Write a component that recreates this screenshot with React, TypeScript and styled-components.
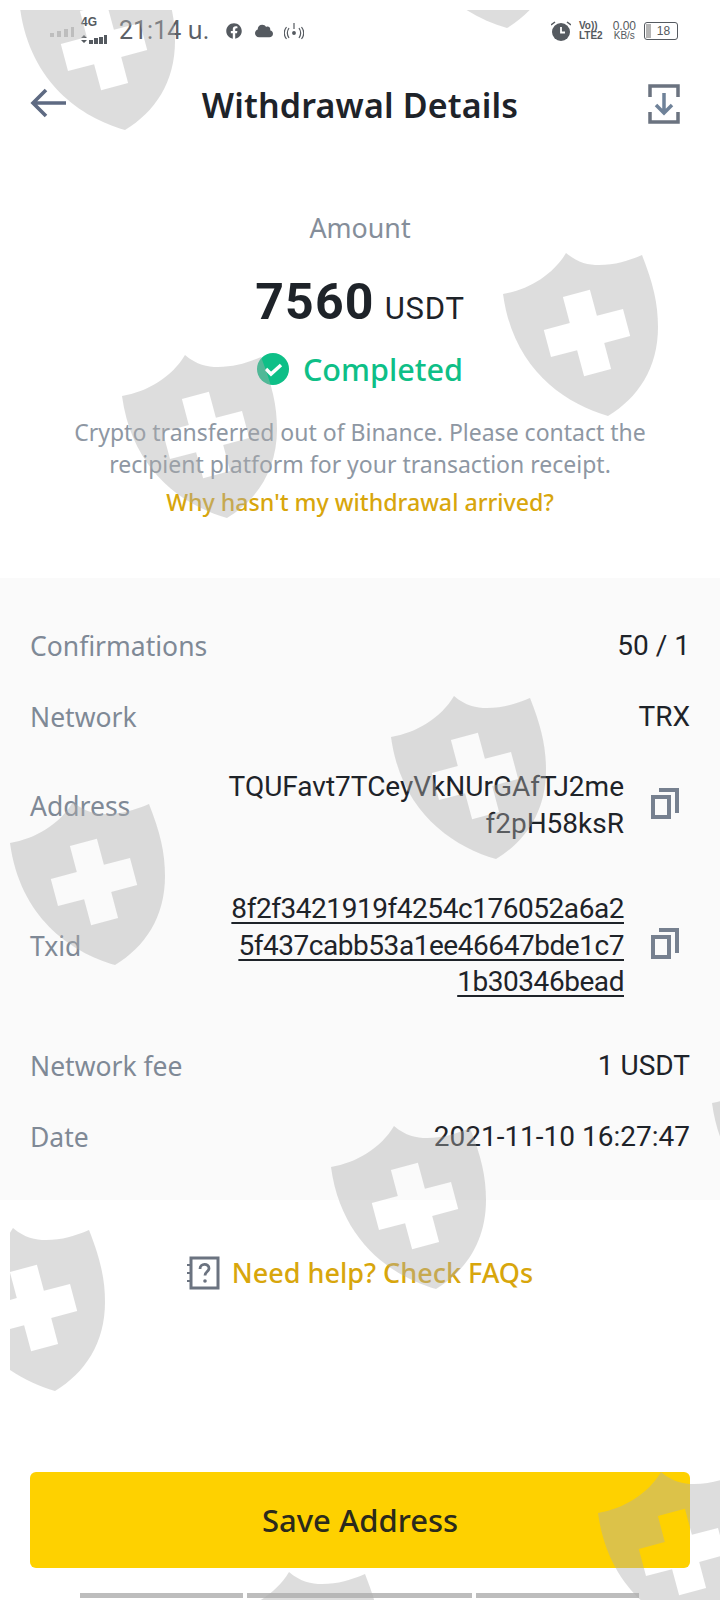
import React from "react";
import styled, { createGlobalStyle } from "styled-components";
import { FaFacebook, FaCloud } from "react-icons/fa";

const Global = createGlobalStyle`
  html, body { margin: 0; padding: 0; background: #fff; }
  * { box-sizing: border-box; }
`;

const plex = `"Noto Sans", "Liberation Sans", sans-serif`;
const din = `Roboto, "Liberation Sans", sans-serif`;

const Page = styled.div`
  position: relative;
  width: 720px;
  height: 1600px;
  overflow: hidden;
  display: flex;
  flex-direction: column;
  background: #fff;
  font-family: ${plex};
  color: #1e2329;
`;

const StatusBar = styled.div`
  height: 60px;
  display: flex;
  align-items: center;
  justify-content: space-between;
  padding: 1px 42px 0 50px;
  color: #555a60;
`;
const StatusGroup = styled.div`
  display: flex;
  align-items: center;
`;
const Signal = styled.svg`
  display: block;
`;
const Net = styled.div`
  position: relative;
  width: 28px;
  height: 28px;
  margin: 0 11px 0 5px;
`;
const NetLabel = styled.span`
  position: absolute;
  left: 1px;
  top: -2px;
  font: 700 12px "Liberation Sans", sans-serif;
  color: #555a60;
`;
const NetBars = styled.svg`
  position: absolute;
  left: 0;
  bottom: 0;
`;
const Clock = styled.span`
  font: 400 25px ${din}, "Noto Sans Thai";
  color: #5c6066;
  margin-right: 17px;
  white-space: nowrap;
`;
const StatusIcon = styled.span<{ $mr: number }>`
  display: flex;
  margin-right: ${(p) => p.$mr}px;
  color: #555a60;
`;
const Volte = styled.span`
  display: flex;
  flex-direction: column;
  font: 700 10px/10px "Liberation Sans", sans-serif;
  margin-right: 10px;
`;
const Speed = styled.span`
  display: flex;
  flex-direction: column;
  align-items: center;
  font: 400 10px/10px "Liberation Sans", sans-serif;
  margin-right: 8px;
`;
const SpeedNum = styled.span`
  font-size: 12px;
`;
const Battery = styled.span`
  position: relative;
  width: 34px;
  height: 18px;
  border: 1.5px solid #555a60;
  border-radius: 3px;
  display: flex;
  align-items: center;
  justify-content: center;
  padding-left: 5px;
  font: 400 12px "Liberation Sans", sans-serif;
`;
const BatteryFill = styled.span`
  position: absolute;
  left: 1px;
  top: 1px;
  bottom: 1px;
  width: 5px;
  background: #b5b5b5;
`;

const TopBar = styled.div`
  height: 88px;
  display: flex;
  align-items: center;
  justify-content: space-between;
  padding: 0 40px 0 30px;
`;
const BackIcon = styled.svg`
  margin-top: -2px;
`;
const Title = styled.h1`
  margin: 2px 0 0 4px;
  font-size: 34px;
  font-weight: 600;
  line-height: 44px;
  color: #1e2329;
  letter-spacing: 0.15px;
`;

const Summary = styled.div`
  height: 430px;
  display: flex;
  flex-direction: column;
  align-items: center;
  padding-top: 64px;
`;
const AmountLabel = styled.div`
  font-size: 26.8px;
  line-height: 32px;
  color: #858e9a;
`;
const AmountRow = styled.div`
  margin-top: 28px;
  height: 60px;
  display: flex;
  align-items: baseline;
  gap: 10px;
`;
const AmountValue = styled.span`
  font: 700 50px/60px ${din};
  letter-spacing: 1.2px;
`;
const AmountUnit = styled.span`
  font: 400 31px/60px ${din};
  letter-spacing: 0.8px;
`;
const StatusRow = styled.div`
  margin-top: 17px;
  height: 40px;
  display: flex;
  align-items: center;
  gap: 14px;
`;
const Completed = styled.span`
  font-size: 30.6px;
  font-weight: 500;
  line-height: 40px;
  color: #0ebf87;
`;
const Note = styled.p`
  margin: 28px 0 0;
  font-size: 23px;
  line-height: 31.5px;
  color: #8e97a3;
  text-align: center;
`;
const Link = styled.div`
  margin-top: 6px;
  font-size: 23.2px;
  font-weight: 500;
  line-height: 32px;
  color: #d8a60c;
`;

const Details = styled.section`
  height: 622px;
  background: #fafafa;
  padding: 50px 30px 0;
  display: flex;
  flex-direction: column;
`;
const Row = styled.div<{ $gap?: number }>`
  display: flex;
  align-items: center;
  justify-content: space-between;
  margin-top: ${(p) => p.$gap ?? 0}px;
`;
const Label = styled.span`
  font-size: 26.5px;
  line-height: 36px;
  color: #7f8996;
`;
const Value = styled.span`
  font: 400 28px/36px ${din};
  color: #1e2329;
`;
const ValueWrap = styled.div`
  display: flex;
  align-items: center;
  gap: 27px;
`;
const LongValue = styled.div<{ $underline?: boolean }>`
  width: 398px;
  font: 400 28px/36.5px ${din};
  letter-spacing: ${(p) => (p.$underline ? "-0.45px" : "0")};
  text-align: right;
  word-break: break-all;
  color: #1e2329;
  text-decoration: ${(p) => (p.$underline ? "underline" : "none")};
  text-underline-offset: 4px;
  text-decoration-thickness: 1.5px;
`;
const CopyIcon = styled.svg`
  flex: none;
  display: block;
  margin-right: 11px;
  margin-top: -6px;
`;

const Faq = styled.div`
  margin-top: 55px;
  height: 36px;
  display: flex;
  align-items: center;
  justify-content: center;
  gap: 12px;
`;
const FaqText = styled.span`
  font-size: 27px;
  font-weight: 500;
  line-height: 36px;
  color: #d8a60c;
`;

const SaveButton = styled.button`
  margin: auto 30px 0;
  height: 96px;
  flex: none;
  border: 0;
  border-radius: 6px;
  background: #fed100;
  font-family: ${plex};
  font-size: 31px;
  font-weight: 500;
  color: #2b2a1c;
`;
const NavBar = styled.div`
  margin: 25px 0 2px 80px;
  height: 5px;
  flex: none;
  display: flex;
  gap: 4px;
`;
const NavSeg = styled.span<{ $w: number }>`
  width: ${(p) => p.$w}px;
  background: #bdbdbd;
`;

const Watermarks = styled.div`
  position: absolute;
  inset: 10px 0 0 10px;
  overflow: hidden;
  pointer-events: none;
`;
const Shield = styled.svg<{ $x: number; $y: number }>`
  position: absolute;
  left: ${(p) => p.$x - 10}px;
  top: ${(p) => p.$y - 10}px;
`;

const cross = (() => {
  const c = [84, 80];
  const u = [0.966, -0.259];
  const v = [0.259, 0.966];
  const L = 41;
  const W = 14;
  const pts = [
    [-W, -L], [W, -L], [W, -W], [L, -W], [L, W], [W, W],
    [W, L], [-W, L], [-W, W], [-L, W], [-L, -W], [-W, -W],
  ].map(([a, b]) => `${(c[0] + a * u[0] + b * v[0]).toFixed(1)} ${(c[1] + a * u[1] + b * v[1]).toFixed(1)}`);
  return `M${pts.join("L")}Z`;
})();
const shieldPath = `M0 41C25 37 50 22 63 0C75 10 85 12 96 12C112 12 125 8 139 2C150 30 155 50 155 74C155 115 135 145 105 163C60 150 10 115 0 41Z${cross}`;

const shields = [
  [20, -33], [402, -135], [503, 253], [122, 355], [391, 696],
  [10, 802], [331, 1126], [-50, 1228], [598, 1472], [226, 1572], [712, 1062],
];

const Copy = () => (
  <CopyIcon width="28" height="32" viewBox="0 0 28 32" fill="none" stroke="#76808f" strokeWidth="4">
    <rect x="2" y="10" width="16" height="20" />
    <path d="M8 3h18v23" />
  </CopyIcon>
);

export default function App() {
  return (
    <Page>
      <Global />
      <StatusBar>
        <StatusGroup>
          <Signal width="25" height="12" viewBox="0 0 25 12" fill="#c9c9c9">
            <rect x="0" y="8" width="4" height="4" />
            <rect x="7" y="6" width="4" height="6" />
            <rect x="14" y="4" width="4" height="8" />
            <rect x="21" y="2" width="3" height="10" />
          </Signal>
          <Net>
            <NetLabel>4G</NetLabel>
            <NetBars width="28" height="12" viewBox="0 0 28 12" fill="#555a60">
              <path d="M1 5l3-3 3 3zM1 7h6l-3 3z" />
              <rect x="9" y="7" width="4" height="4" />
              <rect x="14" y="5" width="4" height="6" />
              <rect x="19" y="4" width="4" height="7" />
              <rect x="24" y="2" width="3" height="9" />
            </NetBars>
          </Net>
          <Clock>21:14 น.</Clock>
          <StatusIcon $mr={13}><FaFacebook size={16} /></StatusIcon>
          <StatusIcon $mr={11}><FaCloud size={18} /></StatusIcon>
          <StatusIcon $mr={0}>
            <svg width="20" height="20" viewBox="0 0 20 20" fill="none" stroke="#555a60" strokeWidth="1.2">
              <circle cx="10" cy="12" r="1.3" fill="#555a60" />
              <path d="M10 2v6M5 7c-2 3-2 7 0 10M15 7c2 3 2 7 0 10M2.500 6c-3 4-3 8 0 12M17.500 6c3 4 3 8 0 12" />
            </svg>
          </StatusIcon>
        </StatusGroup>
        <StatusGroup>
          <StatusIcon $mr={8}>
            <svg width="20" height="20" viewBox="0 0 20 20">
              <circle cx="10" cy="11" r="9" fill="#555a60" />
              <path d="M10 6v5.500h4" stroke="#fff" strokeWidth="1.800" fill="none" />
              <path d="M0 4l4-3M20 4l-4-3" stroke="#555a60" strokeWidth="1.500" />
            </svg>
          </StatusIcon>
          <Volte>
            <span>Vo))</span>
            <span>LTE2</span>
          </Volte>
          <Speed>
            <SpeedNum>0.00</SpeedNum>
            <span>KB/s</span>
          </Speed>
          <Battery>
            <BatteryFill />
            18
          </Battery>
        </StatusGroup>
      </StatusBar>

      <TopBar>
        <BackIcon width="38" height="30" viewBox="0 0 38 30" fill="none" stroke="#5e6a82" strokeWidth="3.600">
          <path d="M36 15H3M16 2L3 15l13 13" />
        </BackIcon>
        <Title>Withdrawal Details</Title>
        <svg width="32" height="40" viewBox="0 0 32 40" fill="none" stroke="#6b7380" strokeWidth="3.500">
          <path d="M2 13V2h28v11M2 28v10h28V28" />
          <path d="M16 9v20M8 21l8 8 8-8" stroke="#6f8299" />
        </svg>
      </TopBar>

      <Summary>
        <AmountLabel>Amount</AmountLabel>
        <AmountRow>
          <AmountValue>7560</AmountValue>
          <AmountUnit>USDT</AmountUnit>
        </AmountRow>
        <StatusRow>
          <svg width="32" height="32" viewBox="0 0 32 32">
            <circle cx="16" cy="16" r="16" fill="#0ebf87" />
            <path d="M9 16l5 5 10-9" fill="none" stroke="#fff" strokeWidth="3.500" />
          </svg>
          <Completed>Completed</Completed>
        </StatusRow>
        <Note>
          Crypto transferred out of Binance. Please contact the
          <br />
          recipient platform for your transaction receipt.
        </Note>
        <Link>Why hasn't my withdrawal arrived?</Link>
      </Summary>

      <Details>
        <Row>
          <Label>Confirmations</Label>
          <Value>50 / 1</Value>
        </Row>
        <Row $gap={35}>
          <Label>Network</Label>
          <Value>TRX</Value>
        </Row>
        <Row $gap={34}>
          <Label>Address</Label>
          <ValueWrap>
            <LongValue>TQUFavt7TCeyVkNUrGAfTJ2mef2pH58ksR</LongValue>
            <Copy />
          </ValueWrap>
        </Row>
        <Row $gap={49}>
          <Label>Txid</Label>
          <ValueWrap>
            <LongValue $underline>8f2f3421919f4254c176052a6a25f437cabb53a1ee46647bde1c71b30346bead</LongValue>
            <Copy />
          </ValueWrap>
        </Row>
        <Row $gap={47}>
          <Label>Network fee</Label>
          <Value>1 USDT</Value>
        </Row>
        <Row $gap={35}>
          <Label>Date</Label>
          <Value>2021-11-10 16:27:47</Value>
        </Row>
      </Details>

      <Faq>
        <svg width="33" height="34" viewBox="0 0 33 34" fill="none" stroke="#6b7380" strokeWidth="3">
          <rect x="4" y="2" width="27" height="30" />
          <path d="M0 9h5M0 17h5M0 25h5" strokeWidth="2" />
          <path d="M13 13c0-6 9-6 9-.5 0 3-4 3-4 7" strokeWidth="2.800" />
          <circle cx="18" cy="25" r="1.800" fill="#6b7380" stroke="none" />
        </svg>
        <FaqText>Need help? Check FAQs</FaqText>
      </Faq>

      <SaveButton>Save Address</SaveButton>
      <NavBar>
        <NavSeg $w={163} />
        <NavSeg $w={225} />
        <NavSeg $w={163} />
      </NavBar>

      <Watermarks>
        {shields.map(([x, y]) => (
          <Shield key={`${x}-${y}`} $x={x} $y={y} width="156" height="164" viewBox="0 0 156 164">
            <path d={shieldPath} fill="rgba(175,175,175,0.42)" fillRule="evenodd" />
          </Shield>
        ))}
      </Watermarks>
    </Page>
  );
}
